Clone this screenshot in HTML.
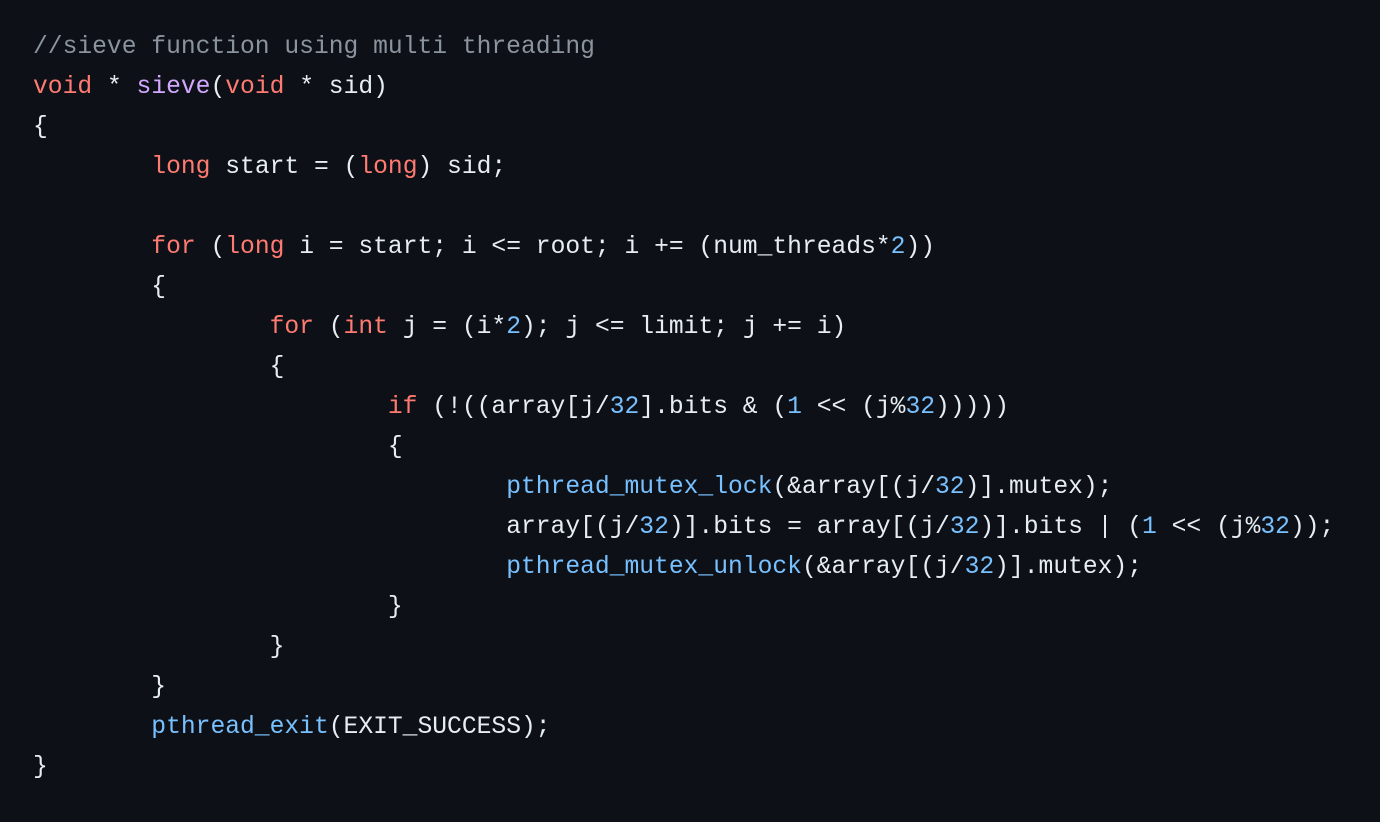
<!DOCTYPE html>
<html><head><meta charset="utf-8"><style>
html,body{margin:0;padding:0;background:#0d1117;width:1380px;height:822px;overflow:hidden}
pre{margin:0;position:absolute;left:33px;top:27px;font-family:"Liberation Mono",monospace;font-size:24.65px;line-height:40px;color:#e6edf3;tab-size:8;white-space:pre}
.c{color:#8b949e}.k{color:#ff7b72}.f{color:#d2a8ff}.e{color:#79c0ff}.n{color:#79c0ff}
</style></head><body><pre><span class="c">//sieve function using multi threading</span>
<span class="k">void</span> * <span class="f">sieve</span>(<span class="k">void</span> * sid)
{
	<span class="k">long</span> start = (<span class="k">long</span>) sid;

	<span class="k">for</span> (<span class="k">long</span> i = start; i &lt;= root; i += (num_threads*<span class="n">2</span>))
	{
		<span class="k">for</span> (<span class="k">int</span> j = (i*<span class="n">2</span>); j &lt;= limit; j += i)
		{
			<span class="k">if</span> (!((array[j/<span class="n">32</span>].bits &amp; (<span class="n">1</span> &lt;&lt; (j%<span class="n">32</span>)))))
			{
				<span class="e">pthread_mutex_lock</span>(&amp;array[(j/<span class="n">32</span>)].mutex);
				array[(j/<span class="n">32</span>)].bits = array[(j/<span class="n">32</span>)].bits | (<span class="n">1</span> &lt;&lt; (j%<span class="n">32</span>));
				<span class="e">pthread_mutex_unlock</span>(&amp;array[(j/<span class="n">32</span>)].mutex);
			}
		}
	}
	<span class="e">pthread_exit</span>(EXIT_SUCCESS);
}</pre></body></html>
